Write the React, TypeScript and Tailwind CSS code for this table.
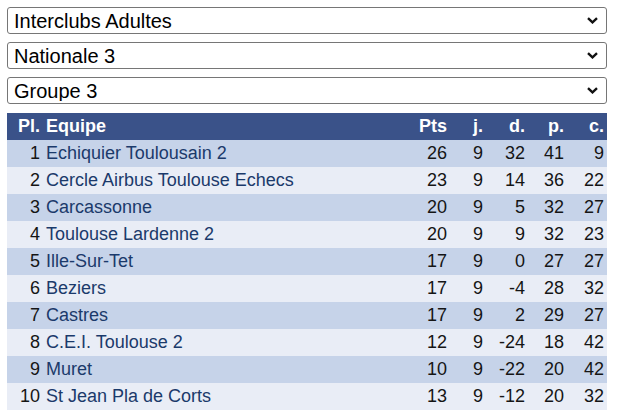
import React from "react"

interface Row {
    pl: number
    equipe: string
    pts: number
    j: number
    d: number
    p: number
    c: number
}

const rows: Row[] = [
    { pl: 1, equipe: "Echiquier Toulousain 2", pts: 26, j: 9, d: 32, p: 41, c: 9 },
    { pl: 2, equipe: "Cercle Airbus Toulouse Echecs", pts: 23, j: 9, d: 14, p: 36, c: 22 },
    { pl: 3, equipe: "Carcassonne", pts: 20, j: 9, d: 5, p: 32, c: 27 },
    { pl: 4, equipe: "Toulouse Lardenne 2", pts: 20, j: 9, d: 9, p: 32, c: 23 },
    { pl: 5, equipe: "Ille-Sur-Tet", pts: 17, j: 9, d: 0, p: 27, c: 27 },
    { pl: 6, equipe: "Beziers", pts: 17, j: 9, d: -4, p: 28, c: 32 },
    { pl: 7, equipe: "Castres", pts: 17, j: 9, d: 2, p: 29, c: 27 },
    { pl: 8, equipe: "C.E.I. Toulouse 2", pts: 12, j: 9, d: -24, p: 18, c: 42 },
    { pl: 9, equipe: "Muret", pts: 10, j: 9, d: -22, p: 20, c: 42 },
    { pl: 10, equipe: "St Jean Pla de Corts", pts: 13, j: 9, d: -12, p: 20, c: 32 },
]

const selects = [
    ["Interclubs Adultes", "Interclubs Jeunes"],
    ["Nationale 3", "Nationale 2", "Régionale"],
    ["Groupe 3", "Groupe 1", "Groupe 2"],
]

const cols = "grid grid-cols-[36px_363px_44px_36px_42px_39px_40px] h-[27px] items-center"

const Chevron = () => (
    <svg
        width="11"
        height="7"
        viewBox="0 0 11 7"
        className="pointer-events-none absolute right-[9px] top-[10px]">
        <path d="M1 1.2 L5.5 5.4 L10 1.2" fill="none" stroke="#111" strokeWidth="2.4" />
    </svg>
)

const App = () => {
    return (
        <div className="w-[622px] h-[416px] bg-white px-[7px] pt-[7px] font-['Liberation_Sans',Arial,sans-serif]">
            <div className="flex flex-col gap-[8px] w-[600px]">
                {selects.map((opts) => (
                    <div key={opts[0]} className="relative">
                        <select
                            defaultValue={opts[0]}
                            className="appearance-none block w-full h-[27px] border border-[#767676] rounded-[3px] bg-white pl-[6px] text-[20px] leading-none text-black">
                            {opts.map((o) => (
                                <option key={o}>{o}</option>
                            ))}
                        </select>
                        <Chevron />
                    </div>
                ))}
            </div>

            {/* classement */}
            <div className="mt-[9px] w-[600px] text-[18px]">
                <div className={`${cols} bg-[#3a5289] text-white font-bold`}>
                    <span className="text-right pr-[3px]">Pl.</span>
                    <span className="pl-[3px]">Equipe</span>
                    <span className="text-right pr-[3px]">Pts</span>
                    <span className="text-right pr-[3px]">j.</span>
                    <span className="text-right pr-[3px]">d.</span>
                    <span className="text-right pr-[3px]">p.</span>
                    <span className="text-right pr-[3px]">c.</span>
                </div>
                {rows.map((r, i) => (
                    <div
                        key={r.pl}
                        className={`${cols} ${i % 2 === 0 ? "bg-[#c6d3e9]" : "bg-[#e9edf6]"} text-[#151515]`}>
                        <span className="text-right pr-[3px]">{r.pl}</span>
                        <span className="pl-[3px] text-[#1b3a6b]">{r.equipe}</span>
                        <span className="text-right pr-[3px]">{r.pts}</span>
                        <span className="text-right pr-[3px]">{r.j}</span>
                        <span className="text-right pr-[3px]">{r.d}</span>
                        <span className="text-right pr-[3px]">{r.p}</span>
                        <span className="text-right pr-[3px]">{r.c}</span>
                    </div>
                ))}
            </div>
        </div>
    )
}

export default App
